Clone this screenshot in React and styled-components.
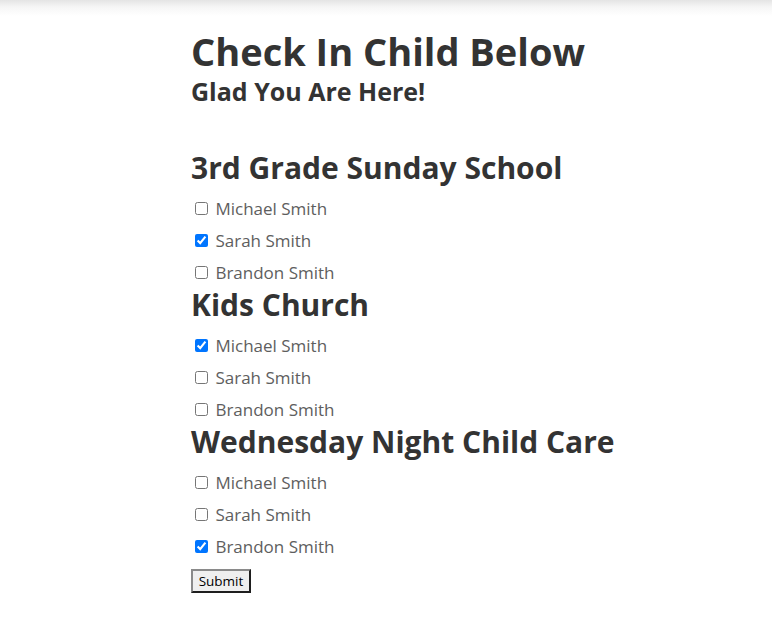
import React from "react";
import styled, { createGlobalStyle } from "styled-components";

const GlobalStyle = createGlobalStyle`
  html, body {
    margin: 0;
    padding: 0;
    background: #fff;
  }
  body {
    font-family: "Open Sans", "Noto Sans", sans-serif;
    color: #333;
  }
`;

const TopShade = styled.div`
  height: 16px;
  background: linear-gradient(#e4e4e4, #f6f6f6 45%, #fff);
`;

const Main = styled.main`
  padding: 0 0 0 191px;
`;

const Title = styled.h1`
  margin: 12px 0 0;
  font-size: 38px;
  line-height: 46px;
  font-weight: 700;
  color: #333;
`;

const Subtitle = styled.h2`
  margin: 2px 0 0;
  font-size: 25px;
  line-height: 30px;
  font-weight: 700;
  color: #333;
`;

const Form = styled.form`
  margin-top: 46px;
`;

const Group = styled.section``;

const GroupTitle = styled.h3`
  margin: 0 0 9px;
  font-size: 30px;
  line-height: 32px;
  font-weight: 700;
  color: #333;
  white-space: nowrap;
`;

const Row = styled.label`
  display: block;
  font-size: 17px;
  line-height: 32px;
  color: #5e5e5e;
`;

const Check = styled.input`
  margin: 3px 3px 3px 4px;
  width: 13px;
  height: 13px;
  accent-color: #0075ff;
`;

const SubmitButton = styled.button`
  display: block;
  margin-top: 6px;
  width: 60px;
  height: 24px;
  padding: 1px 4px;
  font-family: "Open Sans", "Noto Sans", sans-serif;
  font-size: 13.5px;
  line-height: 18px;
  color: #000;
  background: #efefef;
  border-style: solid;
  border-width: 2px;
  border-color: #8a8a8a #1e1e1e #1e1e1e #8a8a8a;
  border-radius: 0;
`;

const groups = [
  {
    title: "3rd Grade Sunday School",
    checked: [false, true, false],
  },
  {
    title: "Kids Church",
    checked: [true, false, false],
  },
  {
    title: "Wednesday Night Child Care",
    checked: [false, false, true],
  },
];

const kids = ["Michael Smith", "Sarah Smith", "Brandon Smith"];

export default function App() {
  return (
    <>
      <GlobalStyle />
      <TopShade />
      <Main>
        <Title>Check In Child Below</Title>
        <Subtitle>Glad You Are Here!</Subtitle>
        <Form onSubmit={(e) => e.preventDefault()}>
          {groups.map((g) => (
            <Group key={g.title}>
              <GroupTitle>{g.title}</GroupTitle>
              {kids.map((name, i) => (
                <Row key={name}>
                  <Check type="checkbox" defaultChecked={g.checked[i]} /> {name}
                </Row>
              ))}
            </Group>
          ))}
          <SubmitButton type="submit">Submit</SubmitButton>
        </Form>
      </Main>
    </>
  );
}
